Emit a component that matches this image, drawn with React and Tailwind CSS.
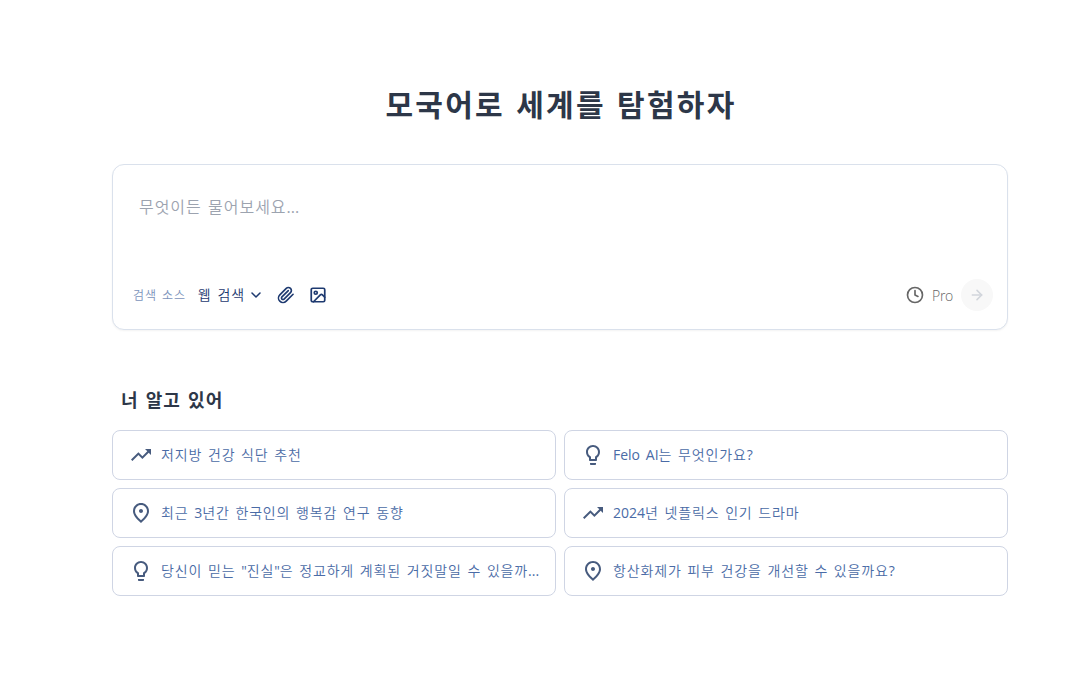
import { MdTrendingUp, MdLightbulbOutline, MdOutlinePlace } from "react-icons/md";
import { ArrowRight, ChevronDown, Clock, Image } from "lucide-react";

const suggestions = [
  { icon: MdTrendingUp, text: "저지방 건강 식단 추천" },
  { icon: MdLightbulbOutline, text: "Felo AI는 무엇인가요?" },
  { icon: MdOutlinePlace, text: "최근 3년간 한국인의 행복감 연구 동향" },
  { icon: MdTrendingUp, text: "2024년 넷플릭스 인기 드라마" },
  { icon: MdLightbulbOutline, text: "당신이 믿는 \"진실\"은 정교하게 계획된 거짓말일 수 있을까..." },
  { icon: MdOutlinePlace, text: "항산화제가 피부 건강을 개선할 수 있을까요?" },
];

// Hangul is tracked slightly wide; Latin letters, digits and punctuation keep normal tracking.
function Tracked({ children }) {
  return children.split(/([!-~]+)/).map((run, i) =>
    i % 2 ? (
      <span key={i} className="font-normal tracking-normal">{run}</span>
    ) : (
      run
    )
  );
}

function Paperclip({ className }) {
  return (
    <svg viewBox="0 0 24 24" fill="none" stroke="currentColor" strokeWidth="2.2" strokeLinecap="round" strokeLinejoin="round" className={className}>
      <path d="m21.44 11.05-9.19 9.19a6 6 0 0 1-8.49-8.49l8.57-8.57A4 4 0 1 1 18 8.84l-8.59 8.57a2 2 0 0 1-2.83-2.83l8.49-8.48" />
    </svg>
  );
}

function SearchBox() {
  return (
    <div className="mt-8 flex h-[166px] flex-col justify-between rounded-xl border border-[#dae1ec] bg-white pt-[30px] pr-[14px] pb-[18px] pl-5 shadow-[0_1px_2px_0_rgb(0_0_0/0.05)]">
      <div className="pl-1.5 text-base leading-6 text-[#9ca3af]">
        <Tracked>무엇이든 물어보세요...</Tracked>
      </div>
      <div className="flex h-8 items-center">
        <span className="pt-0.5 text-xs tracking-[0.07em] text-[#7b93bb]">검색 소스</span>
        <span className="ml-3 text-sm text-[#1e3a70]">웹 검색</span>
        <ChevronDown className="ml-[3px] size-4 text-[#1e3a70]" strokeWidth={2.3} />
        <Paperclip className="ml-[13px] size-[18px] text-[#1e3a70]" />
        <Image className="ml-[14px] size-[18px] text-[#1e3a70]" strokeWidth={2.3} />
        <Clock className="ml-auto size-[18px] text-[#666666]" strokeWidth={2.2} />
        <span className="ml-2 pt-0.5 text-sm font-light tracking-[-0.02em] text-[#666666]">Pro</span>
        <span className="ml-2 flex size-8 items-center justify-center rounded-full bg-[#f8f8f8]">
          <ArrowRight className="size-4 text-[#d1d5db]" strokeWidth={2.3} />
        </span>
      </div>
    </div>
  );
}

export default function App() {
  return (
    <main className="min-h-screen bg-white pt-[79px] pl-28 font-['Open_Sans','Noto_Sans_CJK_KR',sans-serif] font-[350] tracking-[0.06em] [word-spacing:0.08em]">
      <div className="w-[896px]">
        <h1 className="mb-[33px] h-[52px] pl-0.5 text-center text-[30px] leading-[52px] font-bold tracking-[0.075em] text-[#2d3748]">모국어로 세계를 탐험하자</h1>
        <SearchBox />
        <h2 className="mt-14 pl-[9px] text-lg leading-7 font-bold tracking-[0.06em] text-[#2d3748]">너 알고 있어</h2>
        <div className="mt-4 grid grid-cols-2 gap-2">
          {suggestions.map(({ icon: Icon, text }) => (
            <div key={text} className="flex h-[50px] items-center gap-2 rounded-lg border border-[#cfd5e4] px-4">
              <Icon className="size-6 shrink-0 text-[#475b7e]" />
              <span className="text-sm tracking-[0.06em] whitespace-nowrap text-[#4a6ba6]">
                <Tracked>{text}</Tracked>
              </span>
            </div>
          ))}
        </div>
      </div>
    </main>
  );
}
